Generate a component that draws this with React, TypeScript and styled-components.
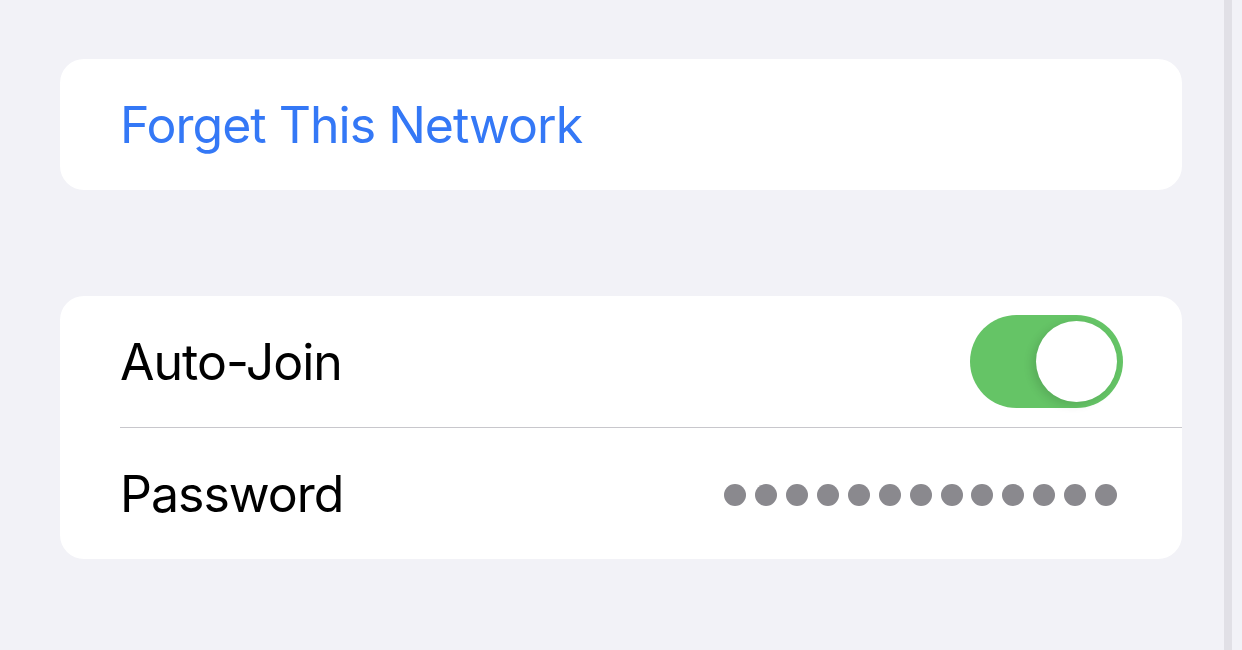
import React from 'react'
import styled, { createGlobalStyle } from 'styled-components'

const colors = {
  page: '#f2f2f7',
  card: '#ffffff',
  blue: '#3478f6',
  label: '#000000',
  separator: '#c8c7cc',
  green: '#65c466',
  dot: '#8a898e',
  scroll: '#e1e0e6',
}

const GlobalStyle = createGlobalStyle`
  html, body {
    margin: 0;
    padding: 0;
    background: ${colors.page};
    font-family: Inter, "Noto Sans", sans-serif;
    -webkit-font-smoothing: antialiased;
  }
`

const Screen = styled.main`
  box-sizing: border-box;
  display: flex;
  width: 1242px;
  height: 650px;
  overflow: hidden;
`

const Content = styled.div`
  flex: 1;
  display: flex;
  flex-direction: column;
  gap: 106px;
  padding: 59px 42px 0 60px;
`

const ScrollTrack = styled.div`
  width: 8px;
  margin-right: 10px;
  background: ${colors.scroll};
`

const Card = styled.section`
  background: ${colors.card};
  border-radius: 24px;
  overflow: hidden;
`

const Row = styled.div<{ $divider?: boolean }>`
  height: 131px;
  margin-left: 60px;
  padding-right: 60px;
  display: flex;
  align-items: center;
  justify-content: space-between;
  border-bottom: ${({ $divider }) =>
    $divider ? `1px solid ${colors.separator}` : 'none'};
`

const Label = styled.span<{ $action?: boolean }>`
  font-size: 50px;
  font-weight: 400;
  letter-spacing: -1px;
  color: ${({ $action }) => ($action ? colors.blue : colors.label)};
`

const Toggle = styled.div`
  box-sizing: border-box;
  width: 153px;
  height: 93px;
  border-radius: 47px;
  background: ${colors.green};
  padding: 6px;
  display: flex;
  justify-content: flex-end;
  margin-right: -1px;
`

const Knob = styled.div`
  width: 81px;
  height: 81px;
  border-radius: 50%;
  background: #fff;
  box-shadow: -4px 3px 10px rgba(0, 0, 0, 0.12);
`

const Dots = styled.div`
  display: flex;
  gap: 8.9px;
  margin-right: 5px;
  padding-top: 2px;
`

const Dot = styled.span`
  flex: none;
  width: 22px;
  height: 22px;
  border-radius: 50%;
  background: ${colors.dot};
`

export default function App() {
  return (
    <>
      <GlobalStyle />
      <Screen>
        <Content>
          <Card>
            <Row>
              <Label $action>Forget This Network</Label>
            </Row>
          </Card>
          <Card>
            <Row $divider>
              <Label>Auto-Join</Label>
              <Toggle role="switch" aria-checked="true">
                <Knob />
              </Toggle>
            </Row>
            <Row>
              <Label>Password</Label>
              <Dots aria-label="password hidden">
                {Array.from({ length: 13 }).map((_, i) => (
                  <Dot key={i} />
                ))}
              </Dots>
            </Row>
          </Card>
        </Content>
        <ScrollTrack />
      </Screen>
    </>
  )
}
